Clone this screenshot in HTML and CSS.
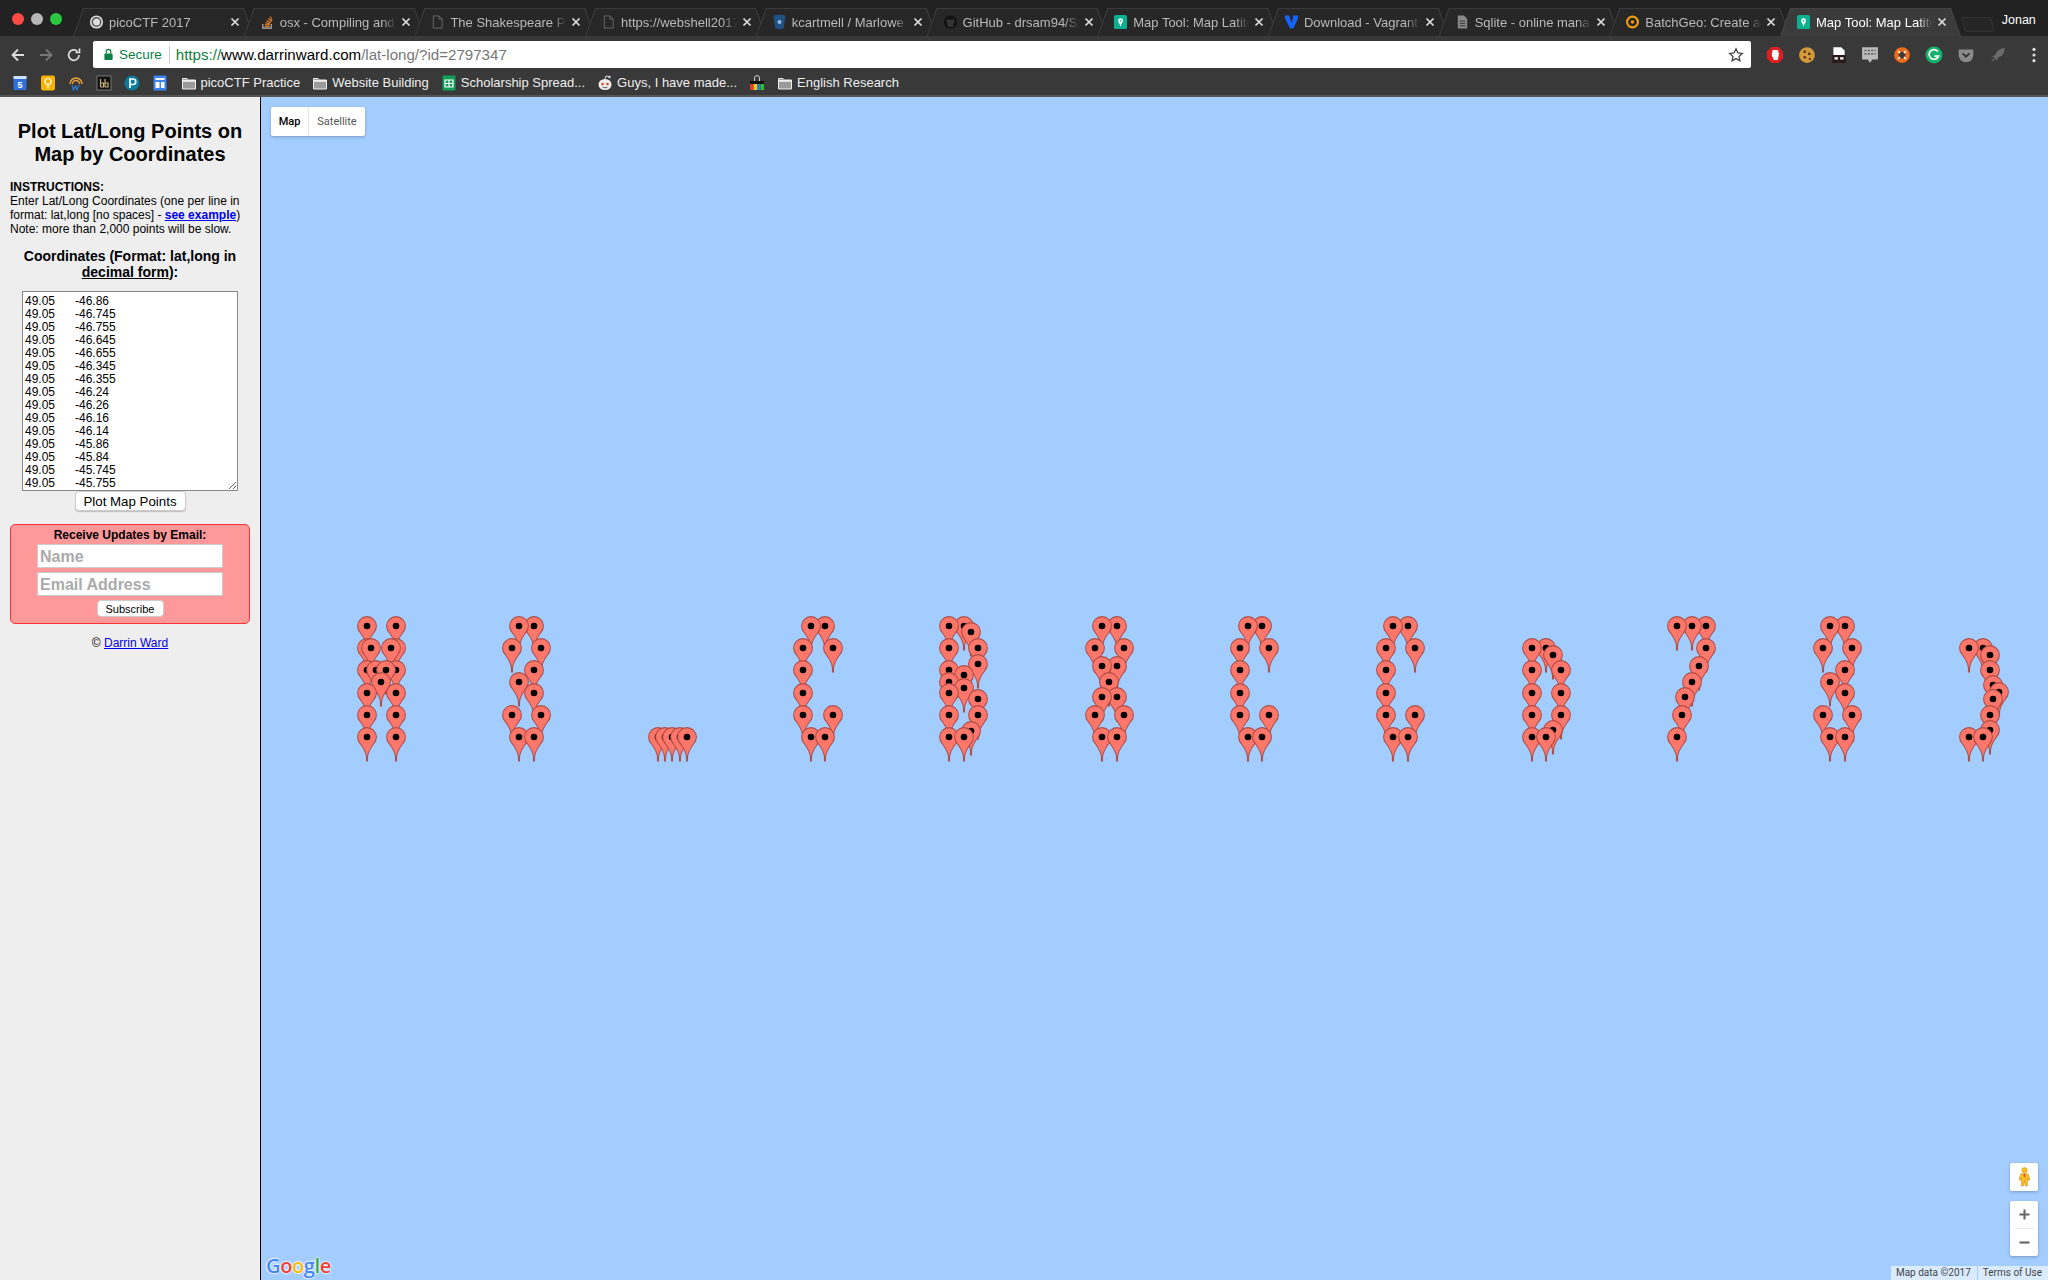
FILE: index.html
```html
<!DOCTYPE html>
<html lang="en">
<head>
<meta charset="utf-8">
<title>Map Tool: Map Latitude and Longitude</title>
<link rel="stylesheet" href="styles.css">
</head>
<body>
<svg class="defs" width="0" height="0" aria-hidden="true">
  <symbol id="x" viewBox="0 0 10 10"><path d="M1.5 1.5l7 7M8.5 1.5l-7 7" stroke="currentColor" stroke-width="1.7" fill="none"/></symbol>
  <symbol id="doc" viewBox="0 0 16 16"><path d="M3.5 1.5h6l3.500 3.500v9.500h-9.500zM9.500 1.500v3.500h3.500" fill="none" stroke="#666" stroke-width="1"/></symbol>
  <symbol id="mt" viewBox="0 0 16 16"><rect x="1" y="0.500" width="14" height="15" rx="2" fill="#0bb08f"/><path d="M8 13c-.5-3-2.600-4-2.600-6.500a2.600 2.600 0 0 1 5.200 0C10.600 9 8.500 10 8 13z" fill="#fff"/><circle cx="8" cy="6.500" r="1" fill="#0bb08f"/></symbol>
  <symbol id="folder" viewBox="0 0 16 16"><path d="M1.500 3.500h4.500l1.500 1.500h7v9h-13z" fill="#9a9a9a" stroke="#eee" stroke-width="1"/><path d="M1.500 5h13v1.800h-13z" fill="#eee"/></symbol>
  <g id="p">
    <path d="M-.5 24V20C-.8 15-3.500 11-6.800 6.500A9.400 9.400 0 1 1 6.800 6.500C3.500 11 .8 15 .5 20V24Z" fill="#ff776b" stroke="#a8483f" stroke-opacity=".9" stroke-width="1.100"/>
    <circle r="3.300" fill="#000"/>
  </g>
</svg>

<header class="chrome">
  <div class="tabstrip">
    <div class="lights"><span class="light red"></span><span class="light grey"></span><span class="light green"></span></div>
    <div class="tabs">
      <div class="tab"><svg class="fav" viewBox="0 0 16 16"><circle cx="8" cy="8" r="7" fill="#ddd"/><circle cx="8" cy="8" r="4.500" fill="none" stroke="#555" stroke-width="1.500"/></svg><span class="tab-title">picoCTF 2017</span><svg class="tab-x"><use href="#x"/></svg></div>
      <div class="tab"><svg class="fav" viewBox="0 0 16 16"><path d="M3 10v4.500h9V10" fill="none" stroke="#bbb" stroke-width="1.200"/><path d="M5 12.800h5M5.200 10.800l5 .5M5.800 8.800l4.800 1.300M7 6.500l4.300 2.500M8.800 4.200l3.300 3.700M11 2l1.700 4.800" stroke="#f48024" stroke-width="1.200"/></svg><span class="tab-title">osx - Compiling and Optimizing</span><svg class="tab-x"><use href="#x"/></svg></div>
      <div class="tab"><svg class="fav"><use href="#doc"/></svg><span class="tab-title">The Shakespeare Programming</span><svg class="tab-x"><use href="#x"/></svg></div>
      <div class="tab"><svg class="fav"><use href="#doc"/></svg><span class="tab-title">https://webshell2017.picoctf</span><svg class="tab-x"><use href="#x"/></svg></div>
      <div class="tab"><svg class="fav" viewBox="0 0 16 16"><path d="M1.500 1.500c3.500-1.500 9.500-1.500 13 0L12.500 14.500c-2 1.500-7 1.500-9 0z" fill="#205081"/><circle cx="8" cy="8" r="2.200" fill="#8fb6dc"/></svg><span class="tab-title">kcartmell / Marlowe / source</span><svg class="tab-x"><use href="#x"/></svg></div>
      <div class="tab"><svg class="fav" viewBox="0 0 16 16"><circle cx="8" cy="8" r="7" fill="#111"/><path d="M5 13v-3c-1-1-1.500-2-1-4l.5-1.500L6 5.500h4l1.500-1 .5 1.500c.5 2 0 3-1 4v3z" fill="#333"/></svg><span class="tab-title">GitHub - drsam94/Spl: Shakespeare</span><svg class="tab-x"><use href="#x"/></svg></div>
      <div class="tab"><svg class="fav"><use href="#mt"/></svg><span class="tab-title">Map Tool: Map Latitude and</span><svg class="tab-x"><use href="#x"/></svg></div>
      <div class="tab"><svg class="fav" viewBox="0 0 16 16"><path d="M1 1h4.500L8 9l1.500-5V1H15v3l-5 11H6.500L1 4z" fill="#1563ff"/></svg><span class="tab-title">Download - Vagrant by</span><svg class="tab-x"><use href="#x"/></svg></div>
      <div class="tab"><svg class="fav" viewBox="0 0 16 16"><path d="M3 1h6.500L13 4.500V15H3z" fill="#888"/><path d="M5 7h6M5 9.500h6M5 12h6" stroke="#333"/></svg><span class="tab-title">Sqlite - online manager tool</span><svg class="tab-x"><use href="#x"/></svg></div>
      <div class="tab"><svg class="fav" viewBox="0 0 16 16"><circle cx="8" cy="8" r="5.800" fill="none" stroke="#f39c12" stroke-width="2.300"/><circle cx="8" cy="8" r="1.800" fill="#f39c12"/></svg><span class="tab-title">BatchGeo: Create an interactive</span><svg class="tab-x"><use href="#x"/></svg></div>
      <div class="tab active"><svg class="fav"><use href="#mt"/></svg><span class="tab-title">Map Tool: Map Latitude and</span><svg class="tab-x"><use href="#x"/></svg></div>
    </div>
    <div class="newtab"></div>
    <div class="profile">Jonan</div>
  </div>

  <div class="toolbar">
    <svg class="nav" viewBox="0 0 16 16"><path d="M14 8H3M8 2.500L2.500 8 8 13.500" fill="none" stroke="#ddd" stroke-width="1.800"/></svg>
    <svg class="nav" viewBox="0 0 16 16"><path d="M2 8h11M8 2.500L13.500 8 8 13.500" fill="none" stroke="#777" stroke-width="1.800"/></svg>
    <svg class="nav" viewBox="0 0 16 16"><path d="M13 8a5.200 5.200 0 1 1-1.600-3.700M13.500 1.500v4h-4" fill="none" stroke="#ddd" stroke-width="1.700"/></svg>
    <div class="omnibox">
      <svg class="lock" viewBox="0 0 12 14"><path d="M3.500 6V4a2.500 2.500 0 0 1 5 0v2" fill="none" stroke="#0b8043" stroke-width="1.300"/><rect x="1.500" y="6" width="9" height="7" rx="1" fill="#0b8043"/></svg>
      <span class="secure">Secure</span>
      <span class="sep"></span>
      <span class="url"><span class="url-scheme">https://</span><span class="url-host">www.darrinward.com</span><span class="url-path">/lat-long/?id=2797347</span></span>
      <svg class="star" viewBox="0 0 16 16"><path d="M8 1.800l1.900 4.100 4.400.5-3.300 3 .9 4.400L8 11.600l-3.900 2.200.9-4.400-3.300-3 4.400-.5z" fill="none" stroke="#444" stroke-width="1.300"/></svg>
    </div>
    <div class="extensions">
      <svg class="ext" viewBox="0 0 16 16"><path d="M5 .8h6L15.200 5v6L11 15.200H5L.8 11V5z" fill="#e02020"/><path d="M6 3.500h4.500L11.500 7 10.500 12.500H7L5 8z" fill="#fff"/></svg>
      <svg class="ext" viewBox="0 0 16 16"><circle cx="8" cy="8" r="7" fill="#d39a3c"/><circle cx="6" cy="5" r="1.200" fill="#5a3510"/><circle cx="10" cy="7" r="1.200" fill="#5a3510"/><circle cx="6" cy="10" r="1.200" fill="#5a3510"/><circle cx="10.500" cy="11.500" r="1" fill="#5a3510"/></svg>
      <svg class="ext" viewBox="0 0 16 16"><path d="M3 1h7l3 3v5H3z" fill="#fff"/><rect x="2" y="8" width="12" height="7" fill="#2b1a1a"/><rect x="4" y="10" width="3" height="2" fill="#fff"/><rect x="9" y="10" width="3" height="2" fill="#fff"/></svg>
      <svg class="ext" viewBox="0 0 16 16"><path d="M1 1h14v11h-5l-2 3-2-3H1z" fill="#bbb"/><path d="M3 4h10M3 7h10" stroke="#666" stroke-width="1.500" stroke-dasharray="2 1"/></svg>
      <svg class="ext" viewBox="0 0 16 16"><circle cx="8" cy="8" r="5" fill="none" stroke="#ef6c1a" stroke-width="4"/><path d="M4.500 4.500l7 7M11.500 4.500l-7 7" stroke="#fff" stroke-width="1.400"/><circle cx="8" cy="8" r="2.500" fill="#3a3a3a"/></svg>
      <svg class="ext" viewBox="0 0 16 16"><circle cx="8" cy="8" r="7.500" fill="#15b26c"/><path d="M11.500 5A4.300 4.300 0 1 0 12 9H8.500" fill="none" stroke="#fff" stroke-width="1.500"/></svg>
      <svg class="ext" viewBox="0 0 16 16"><path d="M1.500 3h13v5a6.500 6.500 0 0 1-13 0z" fill="#8a8a8a"/><path d="M5 6.500l3 3 3-3" fill="none" stroke="#333" stroke-width="1.700"/></svg>
      <svg class="ext" viewBox="0 0 16 16"><path d="M14 2c-4 0-7 2-8.500 6L3 9l1 1 2 2 1 1 1-2.500c4-1.500 6-4.500 6-8.500zM3.500 11L2 14l3-1.500z" fill="#6a6a6a"/></svg>
      <svg class="ext kebab" viewBox="0 0 16 16"><circle cx="8" cy="3" r="1.400" fill="#ddd"/><circle cx="8" cy="8" r="1.400" fill="#ddd"/><circle cx="8" cy="13" r="1.400" fill="#ddd"/></svg>
    </div>
  </div>

  <nav class="bookmarks">
    <div class="bm-icons">
      <svg class="bm" viewBox="0 0 16 16"><rect x="1.500" y="1" width="13" height="14" rx="1" fill="#2f6fd9"/><rect x="1.500" y="1" width="13" height="3" fill="#cfe0fb"/><text x="8" y="13" font-size="9" fill="#fff" text-anchor="middle" class="bm-num">5</text></svg>
      <svg class="bm" viewBox="0 0 16 16"><rect x="1" y="0.500" width="14" height="15" rx="2" fill="#f5b400"/><circle cx="8" cy="6.500" r="3" fill="none" stroke="#fff" stroke-width="1.200"/><path d="M6.500 11h3M7 13h2" stroke="#fff"/></svg>
      <svg class="bm" viewBox="0 0 16 16"><path d="M2 9a6 6 0 0 1 12 0" fill="none" stroke="#e8a33a" stroke-width="1.600"/><path d="M4.500 9a3.500 3.500 0 0 1 7 0" fill="none" stroke="#e8a33a" stroke-width="1.400"/><path d="M4 10l1.500 5 2-4 1.500 4 2-5" fill="none" stroke="#2f77c9" stroke-width="1.300"/></svg>
      <svg class="bm" viewBox="0 0 16 16"><rect x="1" y="1" width="14" height="14" fill="#111" stroke="#777"/><path d="M4.500 4v8M4.500 8h3v4h-3M9 4v8M9 8h3v4H9" fill="none" stroke="#c9b27a" stroke-width="1.200"/></svg>
      <svg class="bm" viewBox="0 0 16 16"><circle cx="8" cy="8" r="7.500" fill="#0a7b9b"/><path d="M6 13V4h3a2.500 2.500 0 0 1 0 5.500H6" fill="none" stroke="#fff" stroke-width="1.700"/></svg>
      <svg class="bm" viewBox="0 0 16 16"><rect x="1.500" y="0.500" width="13" height="15" fill="#3f83f0"/><path d="M3.500 3h9v2h-9zM3.500 7h4v6h-4zM9 7h3.500v6H9z" fill="#fff"/></svg>
    </div>
    <a class="bm-item"><svg class="bm-folder"><use href="#folder"/></svg>picoCTF Practice</a>
    <a class="bm-item"><svg class="bm-folder"><use href="#folder"/></svg>Website Building</a>
    <a class="bm-item"><svg class="bm-folder" viewBox="0 0 16 16"><rect x="1.500" y="0.500" width="13" height="15" rx="1" fill="#0f9d58"/><path d="M4 5h8v7H4zM4 8.500h8M8 5v7" fill="none" stroke="#fff" stroke-width="1.200"/></svg>Scholarship Spread...</a>
    <a class="bm-item"><svg class="bm-folder" viewBox="0 0 16 16"><ellipse cx="8" cy="9.500" rx="6.500" ry="5.500" fill="#eee"/><circle cx="5.500" cy="9" r="1.300" fill="#e0402a"/><circle cx="10.500" cy="9" r="1.300" fill="#e0402a"/><path d="M8 4l1-3 3 .7" fill="none" stroke="#ddd"/><circle cx="12.500" cy="2" r="1.200" fill="#ddd"/><path d="M5.500 12c2 1 3 1 5 0" fill="none" stroke="#555"/></svg>Guys, I have made...</a>
    <a class="bm-item"><svg class="bm-folder" viewBox="0 0 16 16"><path d="M5.500 6V3a2.500 2.500 0 0 1 5 0v3" fill="none" stroke="#ccc"/><rect x="1" y="6" width="14" height="9" fill="#111"/><rect x="1" y="9" width="3.500" height="6" fill="#e33"/><rect x="4.500" y="9" width="3.500" height="6" fill="#fc0"/><rect x="8" y="9" width="3.500" height="6" fill="#2a7de1"/><rect x="11.500" y="9" width="3.500" height="6" fill="#3b3"/></svg></a>
    <a class="bm-item"><svg class="bm-folder"><use href="#folder"/></svg>English Research</a>
  </nav>
</header>

<main class="page">
  <aside class="sidebar">
    <h1 class="title">Plot Lat/Long Points on Map by Coordinates</h1>
    <p class="instructions"><b>INSTRUCTIONS:</b><br>Enter Lat/Long Coordinates (one per line in format: lat,long [no spaces] - <a class="strong-link" href="#">see example</a>)<br>Note: more than 2,000 points will be slow.</p>
    <h2 class="coords-title">Coordinates (Format: lat,long in <u>decimal form</u>):</h2>
    <form class="plot-form">
      <textarea class="coords" spellcheck="false">49.05&#9;-46.86
49.05&#9;-46.745
49.05&#9;-46.755
49.05&#9;-46.645
49.05&#9;-46.655
49.05&#9;-46.345
49.05&#9;-46.355
49.05&#9;-46.24
49.05&#9;-46.26
49.05&#9;-46.16
49.05&#9;-46.14
49.05&#9;-45.86
49.05&#9;-45.84
49.05&#9;-45.745
49.05&#9;-45.755</textarea>
      <button class="plot-btn" type="button">Plot Map Points</button>
    </form>
    <form class="subscribe">
      <div class="sub-title">Receive Updates by Email:</div>
      <input class="sub-input" placeholder="Name">
      <input class="sub-input" placeholder="Email Address">
      <button class="sub-btn" type="button">Subscribe</button>
    </form>
    <p class="copy">© <a href="#">Darrin Ward</a></p>
  </aside>

  <section class="map">
    <svg class="pins" viewBox="261 97 1787 1183" aria-hidden="true">
      <!-- H -->
      <use href="#p" x="367" y="626"/><use href="#p" x="396" y="626"/>
      <use href="#p" x="367" y="648"/><use href="#p" x="396" y="648"/><use href="#p" x="371" y="648"/><use href="#p" x="391" y="648"/>
      <use href="#p" x="367" y="670"/><use href="#p" x="396" y="670"/><use href="#p" x="376" y="670"/><use href="#p" x="386" y="670"/>
      <use href="#p" x="381" y="682"/>
      <use href="#p" x="367" y="693"/><use href="#p" x="396" y="693"/>
      <use href="#p" x="367" y="715"/><use href="#p" x="396" y="715"/>
      <use href="#p" x="367" y="737"/><use href="#p" x="396" y="737"/>
      <!-- 3 -->
      <use href="#p" x="534" y="626"/><use href="#p" x="519" y="626"/>
      <use href="#p" x="512" y="648"/><use href="#p" x="541" y="648"/>
      <use href="#p" x="534" y="670"/><use href="#p" x="519" y="682"/><use href="#p" x="534" y="693"/>
      <use href="#p" x="512" y="715"/><use href="#p" x="541" y="715"/>
      <use href="#p" x="519" y="737"/><use href="#p" x="534" y="737"/>
      <!-- _ -->
      <use href="#p" x="658" y="737"/><use href="#p" x="665" y="737"/><use href="#p" x="672" y="737"/><use href="#p" x="680" y="737"/><use href="#p" x="687" y="737"/>
      <!-- C -->
      <use href="#p" x="825" y="626"/><use href="#p" x="811" y="626"/>
      <use href="#p" x="803" y="648"/><use href="#p" x="833" y="648"/>
      <use href="#p" x="803" y="670"/><use href="#p" x="803" y="693"/>
      <use href="#p" x="803" y="715"/><use href="#p" x="833" y="715"/>
      <use href="#p" x="811" y="737"/><use href="#p" x="825" y="737"/>
      <!-- B -->
      <use href="#p" x="964" y="626"/><use href="#p" x="949" y="626"/>
      <use href="#p" x="971" y="632"/>
      <use href="#p" x="978" y="648"/><use href="#p" x="949" y="648"/>
      <use href="#p" x="978" y="664"/><use href="#p" x="949" y="670"/>
      <use href="#p" x="964" y="675"/><use href="#p" x="949" y="682"/>
      <use href="#p" x="964" y="688"/><use href="#p" x="949" y="693"/>
      <use href="#p" x="978" y="699"/>
      <use href="#p" x="949" y="715"/><use href="#p" x="978" y="715"/>
      <use href="#p" x="971" y="731"/>
      <use href="#p" x="949" y="737"/><use href="#p" x="964" y="737"/>
      <!-- 8 -->
      <use href="#p" x="1117" y="626"/><use href="#p" x="1102" y="626"/>
      <use href="#p" x="1095" y="648"/><use href="#p" x="1124" y="648"/>
      <use href="#p" x="1117" y="666"/><use href="#p" x="1102" y="666"/>
      <use href="#p" x="1109" y="682"/>
      <use href="#p" x="1117" y="697"/><use href="#p" x="1102" y="697"/>
      <use href="#p" x="1095" y="715"/><use href="#p" x="1124" y="715"/>
      <use href="#p" x="1102" y="737"/><use href="#p" x="1117" y="737"/>
      <!-- C -->
      <use href="#p" x="1262" y="626"/><use href="#p" x="1248" y="626"/>
      <use href="#p" x="1240" y="648"/><use href="#p" x="1269" y="648"/>
      <use href="#p" x="1240" y="670"/><use href="#p" x="1240" y="693"/>
      <use href="#p" x="1240" y="715"/><use href="#p" x="1269" y="715"/>
      <use href="#p" x="1248" y="737"/><use href="#p" x="1262" y="737"/>
      <!-- C -->
      <use href="#p" x="1408" y="626"/><use href="#p" x="1393" y="626"/>
      <use href="#p" x="1386" y="648"/><use href="#p" x="1415" y="648"/>
      <use href="#p" x="1386" y="670"/><use href="#p" x="1386" y="693"/>
      <use href="#p" x="1386" y="715"/><use href="#p" x="1415" y="715"/>
      <use href="#p" x="1393" y="737"/><use href="#p" x="1408" y="737"/>
      <!-- D -->
      <use href="#p" x="1546" y="648"/><use href="#p" x="1532" y="648"/>
      <use href="#p" x="1553" y="655"/>
      <use href="#p" x="1532" y="670"/><use href="#p" x="1561" y="670"/>
      <use href="#p" x="1532" y="693"/><use href="#p" x="1561" y="693"/>
      <use href="#p" x="1561" y="715"/><use href="#p" x="1532" y="715"/>
      <use href="#p" x="1553" y="730"/>
      <use href="#p" x="1532" y="737"/><use href="#p" x="1546" y="737"/>
      <!-- 7 -->
      <use href="#p" x="1706" y="626"/><use href="#p" x="1692" y="626"/><use href="#p" x="1677" y="626"/>
      <use href="#p" x="1706" y="648"/><use href="#p" x="1699" y="666"/><use href="#p" x="1692" y="682"/>
      <use href="#p" x="1685" y="697"/><use href="#p" x="1682" y="715"/><use href="#p" x="1677" y="737"/>
      <!-- 3 -->
      <use href="#p" x="1845" y="626"/><use href="#p" x="1830" y="626"/>
      <use href="#p" x="1823" y="648"/><use href="#p" x="1852" y="648"/>
      <use href="#p" x="1845" y="670"/><use href="#p" x="1830" y="682"/><use href="#p" x="1845" y="693"/>
      <use href="#p" x="1823" y="715"/><use href="#p" x="1852" y="715"/>
      <use href="#p" x="1830" y="737"/><use href="#p" x="1845" y="737"/>
      <!-- ) -->
      <use href="#p" x="1983" y="648"/><use href="#p" x="1969" y="648"/>
      <use href="#p" x="1990" y="655"/><use href="#p" x="1990" y="670"/>
      <use href="#p" x="1993" y="685"/><use href="#p" x="1999" y="692"/><use href="#p" x="1993" y="699"/>
      <use href="#p" x="1990" y="715"/><use href="#p" x="1990" y="730"/>
      <use href="#p" x="1969" y="737"/><use href="#p" x="1983" y="737"/>
    </svg>

    <div class="maptype"><span class="mt-btn mt-on">Map</span><span class="mt-btn">Satellite</span></div>

    <div class="pegman"><svg class="peg-ico" viewBox="0 0 14 22"><circle cx="7" cy="3.500" r="3" fill="#fdbd1c" stroke="#c79312" stroke-width=".5"/><path d="M3 7.500h8l2 6.500-1.500.8-1-2.800-.3 9H8l-1-6-1 6H3.800l-.3-9-1 2.800L1 14z" fill="#fdbd1c" stroke="#b5851a" stroke-width=".5"/><path d="M6 7.500h2l-.3 3.500h-1.400z" fill="#d9542b"/></svg></div>
    <div class="zoomctl">
      <button class="zoom-btn" type="button" aria-label="Zoom in"><svg class="zoom-ico" viewBox="0 0 12 12"><path d="M0.500 6h11M6 .5v11" stroke="#666" stroke-width="2.300"/></svg></button>
      <span class="zoom-sep"></span>
      <button class="zoom-btn" type="button" aria-label="Zoom out"><svg class="zoom-ico" viewBox="0 0 12 12"><path d="M0.500 6h11" stroke="#666" stroke-width="2.300"/></svg></button>
    </div>
    <div class="attrib"><span class="attrib-item">Map data ©2017</span><span class="attrib-item">Terms of Use</span></div>
    <div class="glogo"><span class="g-blue">G</span><span class="g-red">o</span><span class="g-yellow">o</span><span class="g-blue">g</span><span class="g-green">l</span><span class="g-red">e</span></div>
  </section>
</main>
</body>
</html>
```

FILE: styles.css
```css
* { box-sizing: border-box; }
html, body { margin: 0; height: 100%; }
body {
  width: 2048px;
  height: 1280px;
  overflow: hidden;
  display: flex;
  flex-direction: column;
  background: #eee;
  font-family: "Liberation Sans", Arial, sans-serif;
  color: #000;
}
.defs { position: absolute; }

/* Browser chrome */
.chrome { flex: none; height: 97px; background: #393939; border-bottom: 2px solid #555; }
.tabstrip { height: 36px; display: flex; background: #222; position: relative; }
.lights { width: 73px; flex: none; display: flex; gap: 7px; padding: 13px 0 0 12px; }
.light { width: 12px; height: 12px; border-radius: 50%; }
.red { background: #fc4a45; }
.grey { background: #b8b8b8; }
.green { background: #2bc840; }
.tabs { display: flex; padding-top: 8px; flex: none; }
.tab {
  width: 181px;
  margin-right: -10.3px;
  height: 28px;
  display: flex;
  align-items: center;
  padding: 0 14px 0 16px;
  position: relative;
  color: #b9b9b9;
  font-size: 13px;
}
.tab::before, .tab::after {
  content: "";
  position: absolute;
  inset: 0;
  clip-path: polygon(0 100%, 10px 0, calc(100% - 10px) 0, 100% 100%);
  z-index: 0;
}
.tab::before { background: #3a3a3a; }
.tab::after { background: #272727; inset: 1px 1px 0 1px; }
.tab.active { color: #fff; z-index: 2; }
.tab.active::before { background: #444; }
.tab.active::after { background: #3b3b3b; }
.fav, .tab-title, .tab-x { position: relative; z-index: 1; }
.fav { width: 15px; height: 16px; flex: none; margin-right: 5px; }
.tab-title {
  flex: 1;
  min-width: 0;
  white-space: nowrap;
  overflow: hidden;
  -webkit-mask-image: linear-gradient(90deg, #000 88%, transparent);
  mask-image: linear-gradient(90deg, #000 88%, transparent);
}
.tab-x { width: 10px; height: 10px; flex: none; margin-left: 5px; color: #ddd; }
.newtab {
  width: 30px;
  height: 15px;
  margin: 17px 0 0 12px;
  background: #262626;
  border: 1px solid #333;
  border-radius: 2px;
  transform: skewX(15deg);
  flex: none;
}
.profile { color: #fff; font-size: 12.5px; margin: 13px 0 0 9px; }

.toolbar { height: 32px; display: flex; align-items: flex-start; position: relative; }
.nav { width: 16px; height: 16px; flex: none; margin: 11px 12px 0 0; }
.nav:first-child { margin-left: 10px; }
.omnibox {
  width: 1658px;
  height: 27px;
  margin: 5px 0 0 -1px;
  background: #fff;
  border-radius: 2px;
  display: flex;
  align-items: center;
  padding: 0 7px 0 10px;
  font-size: 14px;
  flex: none;
}
.lock { width: 11px; height: 13px; flex: none; margin-right: 4px; }
.secure { color: #0b8043; font-size: 13.5px; margin-left: 1px; }
.sep { width: 1px; height: 18px; background: #ccc; margin: 0 6px 0 7px; }
.url { flex: 1; white-space: nowrap; font-size: 15.1px; }
.url-scheme { color: #0b8043; }
.url-host { color: #000; }
.url-path { color: #777; }
.star { width: 16px; height: 16px; flex: none; }
.extensions { display: flex; gap: 13.800px; margin: 10px 0 0 15px; align-items: center; }
.ext { width: 18px; height: 18px; flex: none; }
.kebab { margin-left: 5px; }

.bookmarks { height: 27px; display: flex; align-items: center; color: #eee; font-size: 13px; padding: 2px 0 0 12px; }
.bm-icons { display: flex; gap: 12px; margin-right: .5px; }
.bm { width: 16px; height: 16px; flex: none; }
.bm-num { font-family: "Liberation Sans", sans-serif; font-weight: 700; }
.bm-item { display: flex; align-items: center; gap: 4px; margin-left: 12px; white-space: nowrap; }
.bm-folder { width: 16px; height: 16px; flex: none; }

/* Page */
.page { flex: 1; min-height: 0; display: flex; }
.sidebar {
  width: 261px;
  flex: none;
  background: #eee;
  border-right: 1px solid #000;
  padding: 23px 10px 0;
  font-size: 12px;
}
.title { margin: 0; font-size: 20px; line-height: 23px; font-weight: 700; text-align: center; padding: 0 6px; }
.instructions { margin: 14px 0 0; line-height: 14px; }
.instructions a, .copy a { color: #00e; }
.strong-link { font-weight: 700; }
.coords-title { margin: 12px 0 0; font-size: 14px; line-height: 16px; font-weight: 700; text-align: center; }
.plot-form { display: flex; flex-direction: column; align-items: center; margin-top: 11px; }
.coords {
  width: 216px;
  height: 200px;
  display: block;
  margin: 0;
  padding: 3px 2px;
  border: 1px solid #888;
  background: #fff;
  font: 12px/13px "Liberation Sans", sans-serif;
  tab-size: 50px;
  white-space: pre;
  overflow: hidden;
  color: #000;
}
.plot-btn {
  width: 111px;
  height: 20px;
  margin-top: 0;
  padding: 0;
  background: #fff;
  border: 1px solid #ccc;
  border-radius: 4px;
  font: 13.300px "Liberation Sans", sans-serif;
  color: #000;
  box-shadow: 0 1px 1px rgba(0,0,0,.2);
}
.subscribe {
  margin-top: 13px;
  height: 100px;
  border: 1px solid #f33;
  border-radius: 5px;
  background: #f99;
  display: flex;
  flex-direction: column;
  align-items: center;
}
.sub-title { font-weight: 700; line-height: 14px; margin-top: 3px; }
.sub-input {
  width: 186px;
  height: 24px;
  margin: 2px 0;
  padding: 1px 2px 0;
  border: 1px solid #ccc;
  background: #fff;
  font: 700 16px "Liberation Sans", sans-serif;
}
.sub-input::placeholder { color: #aaa; opacity: 1; }
.sub-btn {
  width: 67px;
  height: 17px;
  margin-top: 2px;
  padding: 0;
  background: #fff;
  border: 1px solid #ccc;
  border-radius: 4px;
  font: 11px "Liberation Sans", sans-serif;
  color: #000;
}
.copy { margin: 12px 0 0; text-align: center; line-height: 14px; }

/* Map */
.map { flex: 1; position: relative; background: #a3ccff; overflow: hidden; }
.pins { position: absolute; inset: 0; width: 100%; height: 100%; }
.maptype {
  position: absolute;
  left: 10px;
  top: 10px;
  height: 29px;
  display: flex;
  background: #fff;
  border-radius: 2px;
  box-shadow: 0 1px 3px rgba(0,0,0,.25);
  font: 11px "Roboto", sans-serif;
}
.mt-btn { display: flex; align-items: center; justify-content: center; padding: 0 8px; color: #565656; }
.mt-on { color: #000; font-weight: 500; border-right: 1px solid #e6e6e6; width: 38px; padding: 0; }
.mt-btn:last-child { width: 56px; padding: 0; }
.pegman, .zoomctl {
  position: absolute;
  right: 10px;
  width: 28px;
  background: #fff;
  border-radius: 2px;
  box-shadow: 0 1px 3px rgba(0,0,0,.25);
  display: flex;
  flex-direction: column;
  align-items: center;
}
.pegman { top: 1066px; height: 28px; justify-content: center; }
.peg-ico { width: 13px; height: 20px; }
.zoomctl { top: 1104px; height: 55px; }
.zoom-btn { width: 28px; height: 27px; padding: 0; border: 0; background: none; display: flex; align-items: center; justify-content: center; }
.zoom-ico { width: 11px; height: 11px; }
.zoom-sep { width: 19px; height: 1px; background: #e6e6e6; flex: none; }
.attrib { position: absolute; right: 0; bottom: 0; height: 14px; display: flex; gap: 1px; font: 10px/14px "Roboto", sans-serif; color: #444; }
.attrib-item { background: rgba(255,255,255,.6); padding: 0 6px 0 5px; }
.glogo {
  position: absolute;
  left: 5px;
  bottom: 2px;
  font: 600 20px/24px "Open Sans", sans-serif;
  letter-spacing: -.4px;
  text-shadow: 0 0 2px #fff, 0 0 2px #fff, 0 0 3px rgba(255,255,255,.8);
}
.g-blue { color: #4285f4; }
.g-red { color: #ea4335; }
.g-yellow { color: #fbbc05; }
.g-green { color: #34a853; }
```
